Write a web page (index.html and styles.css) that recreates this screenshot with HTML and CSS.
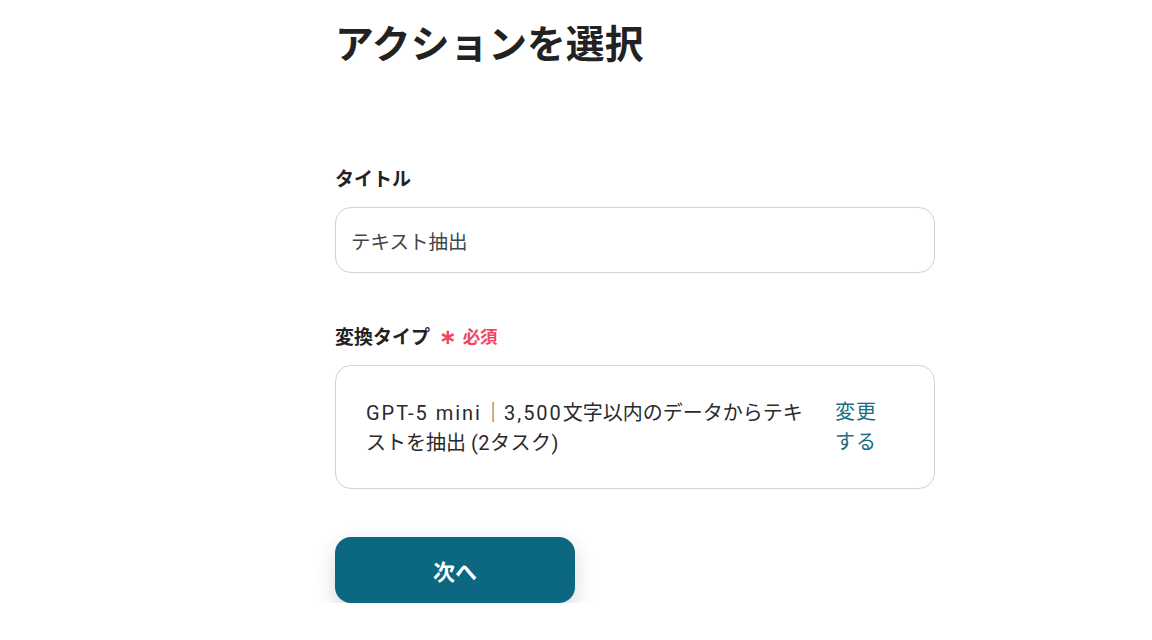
FILE: index.html
```html
<!DOCTYPE html>
<html lang="ja">
<head>
<meta charset="utf-8">
<link rel="stylesheet" href="styles.css">
</head>
<body>
<main class="page">
  <h1 class="title">アクションを選択</h1>
  <section class="field field-first">
    <label class="label">タイトル</label>
    <div class="input">テキスト抽出</div>
  </section>
  <section class="field">
    <label class="label">変換タイプ<span class="req"><span class="ast">∗</span>必須</span></label>
    <div class="select">
      <div class="select-text"><span class="latin">GPT-5 mini</span><span class="bar">｜</span><span class="latin">3,500</span>文字以内のデータからテキストを抽出<span class="paren">(2タスク)</span></div>
      <a class="change">変更する</a>
    </div>
  </section>
  <button class="next">次へ</button>
</main>
</body>
</html>
```

FILE: styles.css
```css
html, body {
  margin: 0;
  padding: 0;
  background: #ffffff;
}
body {
  font-family: "Roboto", "Noto Sans CJK JP", sans-serif;
  color: #222222;
}
.page {
  width: 600px;
  margin-left: 335px;
  padding-top: 11px;
}
.title {
  margin: 0;
  font-family: "Noto Sans CJK JP", sans-serif;
  font-size: 38.8px;
  line-height: 60px;
  font-weight: 700;
  color: #222222;
}
.field {
  display: flex;
  flex-direction: column;
}
.field-first {
  margin-top: 93px;
}
.field + .field {
  margin-top: 49px;
}
.label {
  font-family: "Noto Sans CJK JP", sans-serif;
  font-size: 19px;
  font-weight: 700;
  line-height: 28px;
  color: #222222;
  margin-bottom: 15px;
  display: flex;
  align-items: center;
}
.req {
  color: #ef4763;
  font-size: 17.5px;
  font-weight: 700;
  margin-left: 9px;
  display: inline-flex;
  align-items: center;
}
.ast {
  font-family: "DejaVu Sans", sans-serif;
  font-size: 21px;
  font-weight: 700;
  margin-right: 6px;
  line-height: 1;
  position: relative;
  top: 1px;
}
.input {
  box-sizing: border-box;
  height: 66px;
  border: 1px solid #cfd3da;
  border-radius: 16px;
  padding: 0 15px;
  display: flex;
  align-items: center;
  font-size: 19.5px;
  color: #40454c;
}
.select {
  box-sizing: border-box;
  height: 124px;
  border: 1px solid #cfd3da;
  border-radius: 16px;
  padding: 0 51px 0 30px;
  display: flex;
  align-items: center;
  gap: 23px;
}
.select-text {
  flex: 1;
  font-size: 20px;
  line-height: 30px;
  color: #2a2a2a;
}
.latin {
  letter-spacing: 2px;
}
.bar {
  font-family: "Noto Sans CJK JP", sans-serif;
  color: #555555;
  font-weight: 400;
  margin: 0 1px;
}
.paren {
  margin-left: 5px;
  letter-spacing: 0.5px;
}
.change {
  width: 48px;
  font-size: 20px;
  line-height: 30px;
  letter-spacing: 1px;
  color: #1a6c82;
}
.next {
  margin-top: 48px;
  width: 240px;
  height: 66px;
  border: none;
  border-radius: 16px;
  background: #0b6880;
  color: #ffffff;
  font-family: "Noto Sans CJK JP", sans-serif;
  font-size: 22px;
  font-weight: 700;
  box-shadow: 0 8px 20px rgba(0, 40, 60, 0.18);
}
```
